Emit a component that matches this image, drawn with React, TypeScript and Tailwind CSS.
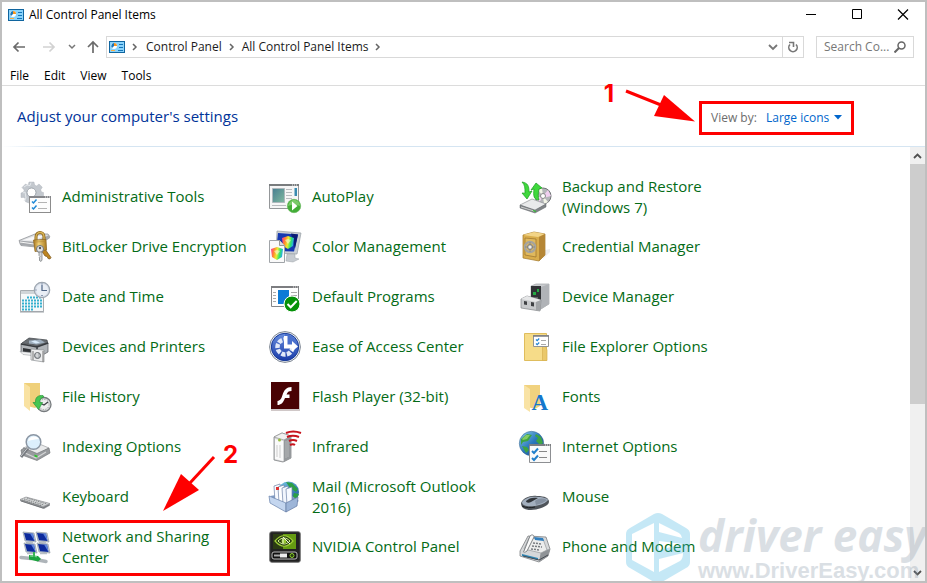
import React from "react";

type IconProps = { children: React.ReactNode };

function Icon({ children }: IconProps) {
  return (
    <svg width="32" height="32" viewBox="0 0 32 32" fill="none" className="shrink-0 overflow-visible" aria-hidden="true">
      {children}
    </svg>
  );
}

const GearIcon = () => (
  <Icon>
    <g fill="#c3c8ce" stroke="#a9afb6" strokeWidth=".4">
      <path d="M10 1h5l.6 3 2 .9L20 3l3.300 3.200-1.600 2.600.8 2.200 2 .5v4L10 22l-3.500-1.300.2-2.600-1.900-1.700L2 16.500V12l2.600-1 .6-2L3 6.500 6.500 3l2.600 1.500z" />
    </g>
    <path d="M5 6l3-2 3 .6 1-3M4 12l2-1 1 6-2 3" stroke="#e4e8ec" strokeWidth="1" />
    <circle cx="12.500" cy="11.500" r="4.500" fill="#fff" stroke="#9ea5ac" />
    <rect x="10.500" y="15.500" width="21" height="16" fill="#fdfdfd" stroke="#8c8c8c" />
    <path d="M10 16h22" stroke="#85868a" strokeWidth="2" />
    <path d="M26 16h1M28 16h1M30 16h1" stroke="#eee" />
    <path d="M13 20.500l1.500 1.500 3-3.500M13 26.500l1.500 1.500 3-3.500" stroke="#2089d6" strokeWidth="1.500" />
    <path d="M19 21.500h9M19 27.500h9" stroke="#b4b4b4" />
  </Icon>
);

const BitLockerIcon = () => (
  <Icon>
    <defs>
      <linearGradient id="lock" x1="0" x2="1">
        <stop stopColor="#a9771d" />
        <stop offset=".4" stopColor="#f1d27a" />
        <stop offset="1" stopColor="#a97a1f" />
      </linearGradient>
    </defs>
    <path d="M0 9.500L16 3h13l2 3-14 10-15-1.500z" fill="#dcdee1" stroke="#85888c" strokeWidth=".7" />
    <path d="M0 9.500l16 1.500L30 4l1 3-14 9-16-2z" fill="#a5a8ac" />
    <path d="M3 9.500L16 5h9l-9 4.500z" fill="#f8f8f9" />
    <path d="M1 11l14 2" stroke="#f5f5f5" />
    <path d="M17 10V6c0-6 8-6 8 0v4" stroke="#8c6519" strokeWidth="3" />
    <path d="M17 10V6c0-6 8-6 8 0v4" stroke="#d9b558" strokeWidth="1.300" />
    <path d="M22 19l4-1 6 8.500-1 1.500-2-.5-1-2-2-.5z" fill="#bd8521" stroke="#79541a" strokeWidth=".7" />
    <path d="M14.500 9L27 8.500l.6 10.500L16 20.500z" fill="url(#lock)" stroke="#8a621c" strokeWidth=".7" />
    <path d="M15.500 11l11-.5M15.500 17l11.500-1" stroke="#b38430" strokeWidth=".6" />
    <circle cx="21" cy="18" r="3.500" fill="#e1e3e5" stroke="#6e7276" />
    <circle cx="21" cy="17" r="1.200" fill="#555" />
    <path d="M20 21h3v8l-1 1.500L20 29l1-1-1-1 1-1.500-1-1z" fill="#d5d7d9" stroke="#73777a" strokeWidth=".7" />
  </Icon>
);

const DateIcon = () => (
  <Icon>
    <path d="M1.500 9.500h23v21h-23z" fill="#f6f8f9" stroke="#a7acb0" />
    <path d="M2 10h22v3H2z" fill="#d0d5d8" />
    <path d="M8 16.500h15M3 19.500h20M3 22.500h20M3 25.500h20M3 28.500h11" stroke="#35b0cf" strokeWidth="2" strokeDasharray="2 1" />
    <path d="M1 31h24" stroke="#9ea3a8" />
    <circle cx="23" cy="9" r="7.700" fill="#d8dfe9" stroke="#9da6b0" strokeWidth="1.200" />
    <circle cx="23" cy="9" r="6" fill="#e9eef5" />
    <path d="M23 4v5.500h5M23 2.500v1M23 14v1M16.500 9h1" stroke="#4f6585" strokeWidth="1.200" />
  </Icon>
);

const PrinterIcon = () => (
  <Icon>
    <path d="M3 12L10 7l18 2 1 4-4 3z" fill="#696e73" stroke="#3f4347" strokeWidth=".7" />
    <path d="M10 9.500l11-1 5 3-8 2-8-1z" fill="#9fafbe" />
    <path d="M12 10.500l4-1 5 2-4 1z" fill="#d9ebfa" />
    <path d="M2 12.500l16 2.500 11-3v9l-9 5-18-5z" fill="#b0b4b8" stroke="#54585c" strokeWidth=".7" />
    <path d="M18 15v10M2 13l16 3 11-4" stroke="#383c40" strokeWidth="1.600" />
    <path d="M4 17l9 1.500v4L4 21z" fill="#303336" />
    <path d="M1 20.500l11 1 1 3-9-1z" fill="#f1f2f3" stroke="#8e9296" strokeWidth=".5" />
    <path d="M12 18l13 1v12l-13-2z" fill="#edeeef" stroke="#8c9093" strokeWidth=".7" />
    <path d="M14 20v9M24 20v11" stroke="#777" />
    <circle cx="18.500" cy="24.500" r="3" fill="#b8bcc0" stroke="#666a6e" />
    <path d="M18 22v4" stroke="#eee" />
  </Icon>
);

const FileHistoryIcon = () => (
  <Icon>
    <path d="M5 2h16v22l-5 3-11-3z" fill="#efd07a" />
    <path d="M5 2l6 4v24l-6-5z" fill="#f9e2a2" />
    <circle cx="25" cy="23.500" r="7" fill="#d9dbdc" stroke="#777b7e" strokeWidth="1.300" />
    <circle cx="25" cy="23.500" r="5" fill="#eee" stroke="#999" strokeDasharray="1 1.600" />
    <path d="M21 22l4 2 4-3" stroke="#404347" strokeWidth="1.200" />
    <path d="M24 14.500c-5-.5-8 2-7.500 7H14l5.500 7 4-7h-2.700c0-3 .7-4.500 4-5.500z" fill="#45c652" stroke="#2c983d" strokeWidth=".7" />
  </Icon>
);

const IndexingIcon = () => (
  <Icon>
    <path d="M4 17l14-5 12 5-12 7z" fill="#e9eaeb" stroke="#9b9ea1" strokeWidth=".7" />
    <path d="M2 19l3-2 13 5.500L30 17l1 5-13 7.500L3 24z" fill="#989b9e" stroke="#75787b" strokeWidth=".7" />
    <path d="M4 21l13 6 10-6" stroke="#d3d4d5" strokeWidth="1.300" />
    <path d="M15.500 23.500l3 1.300v2l-3-1.300z" fill="#2bc32b" />
    <path d="M9 17l-7 9" stroke="#777b80" strokeWidth="3" />
    <path d="M8.500 17l-6.500 8" stroke="#c9ccd0" />
    <circle cx="14.500" cy="11" r="7.300" fill="#dceffc" stroke="#8b96a3" strokeWidth="1.500" />
    <path d="M9 10c1-5 8-6 11-2-4 0-7 1-11 2z" fill="#fff" />
  </Icon>
);

const KeyboardIcon = () => (
  <Icon>
    <path d="M1 18.500L7 16l24 6.500v2L25 28 1 20z" fill="#9a9da0" />
    <path d="M1 18.500L7 16l24 6.500-7 3z" fill="#d5d7d8" stroke="#8e9193" strokeWidth=".6" />
    <path d="M5 18l20 6M8 17l20 6M3 19l20 6" stroke="#747779" strokeDasharray="1.500 .8" strokeWidth=".8" />
    <path d="M2 20l22 7 6-3" stroke="#5e6265" strokeWidth=".7" />
  </Icon>
);

const Monitor = ({ x, y }: { x: number; y: number }) => (
  <g transform={`translate(${x} ${y})`}>
    <path d="M0 0l11 1 2 9-11-1z" fill="#c3ced8" stroke="#7d8a96" strokeWidth=".6" />
    <path d="M1 1l9 .8L11.500 9 3 8.200z" fill="#0c2a9c" />
    <path d="M7 1.500l3 .3L11.500 9z" fill="#5d84dd" />
    <path d="M3 10.500h7" stroke="#b7bec5" strokeWidth="1.500" />
  </g>
);

const NetworkIcon = () => (
  <Icon>
    <Monitor x={4} y={1} />
    <Monitor x={17} y={1} />
    <Monitor x={5} y={12} />
    <Monitor x={18} y={12} />
    <path d="M2 26.500l10 1M19 29l8 1.500" stroke="#aeb4b9" strokeWidth="3.500" strokeLinecap="round" />
    <path d="M10 24l9 1 3 3-3 2.500-9-2z" fill="#1ca23e" />
    <path d="M11 25l7 .8" stroke="#80dc91" />
    <path d="M14 21h2v5h-2z" fill="#39b454" />
  </Icon>
);

const AutoPlayIcon = () => (
  <Icon>
    <defs>
      <linearGradient id="picture" x1="0" y1="0" x2="1" y2="1">
        <stop stopColor="#477e91" />
        <stop offset="1" stopColor="#80b99f" />
      </linearGradient>
    </defs>
    <path d="M.5 3.500h29v24H.5z" fill="#f6f6f6" stroke="#949799" />
    <path d="M0 4h30" stroke="#797c7e" strokeWidth="2" />
    <path d="M23 4h1M25 4h1M27 4h1" stroke="#eee" />
    <path d="M3.500 7.500h12v14h-12z" fill="url(#picture)" stroke="#aeb8bd" />
    <path d="M17 8.500h6M17 11.500h6M17 14.500h6M17 17.500h6M3 24.500h14" stroke="#b9bcbf" />
    <path d="M25.500 7h2.500v8h-2.500z" fill="#398bb0" />
    <circle cx="25" cy="25" r="6.700" fill="#42ad36" stroke="#69b75e" strokeWidth=".7" />
    <path d="M19 25c2-9 12-7 12 0-4-2-8-2-12 0z" fill="#7aca69" />
    <path d="M23 20.500l5.500 4.500-5.500 4.500z" fill="#fff" />
  </Icon>
);

const ColorShield = () => (
  <>
    <path d="M0 2l6-2 6 2-1 8-5 3-5-3z" fill="url(#rainbow)" />
    <path d="M3 4l3-1 3 1-3 4z" fill="#fff" opacity=".5" />
  </>
);

const ColorIcon = () => (
  <Icon>
    <defs>
      <linearGradient id="rainbow" x1="0" x2="1" y1=".3" y2=".5">
        <stop stopColor="#ff3f8e" />
        <stop offset=".25" stopColor="#ff8a2c" />
        <stop offset=".5" stopColor="#e9f02f" />
        <stop offset=".75" stopColor="#30e072" />
        <stop offset="1" stopColor="#2aa0ff" />
      </linearGradient>
    </defs>
    <path d="M8 0l24 2-4 21-21-1z" fill="#cbd0d5" stroke="#969da3" strokeWidth=".7" />
    <path d="M9 2l20 1.500-4 17L7 20z" fill="#1639b1" />
    <path d="M22 2.500l7 1-3 14z" fill="#0b1c75" />
    <path d="M18 23h8v4l4 1-6 3-7-1z" fill="#c6cbd0" stroke="#9ba1a6" strokeWidth=".5" />
    <g transform="translate(13 5)">
      <ColorShield />
    </g>
    <path d="M.5 9.500h10l5 5v17H.5z" fill="#fafafa" stroke="#a0a4a8" />
    <path d="M10.500 9.500v5h5" fill="#ddd" stroke="#999" />
    <g transform="translate(2 16)">
      <ColorShield />
    </g>
  </Icon>
);

const DefaultsIcon = () => (
  <Icon>
    <path d="M2.500 5.500h27v20h-27z" fill="#fff" stroke="#85878a" />
    <path d="M2 6h28" stroke="#7c7d80" strokeWidth="2" />
    <path d="M24 6h1M26 6h1M28 6h1" stroke="#ddd" />
    <path d="M4 11.500h3M4 14.500h3M4 17.500h3M4 20.500h3M22 11.500h6M22 14.500h6" stroke="#aaa" />
    <path d="M9 9h11v14H9z" fill="#0d7bd6" />
    <circle cx="23" cy="23" r="8" fill="#069209" stroke="#fff" />
    <path d="M18.500 23l3.200 3.200 6-6.200" stroke="#fff" strokeWidth="2" />
  </Icon>
);

const EaseIcon = () => (
  <Icon>
    <defs>
      <linearGradient id="ease" x1="0" x2="0" y1="0" y2="1">
        <stop stopColor="#688ddd" />
        <stop offset="1" stopColor="#193ca9" />
      </linearGradient>
    </defs>
    <circle cx="16" cy="16" r="15.400" fill="#f3f5f8" stroke="#7d8692" />
    <circle cx="16" cy="16" r="13.700" fill="url(#ease)" stroke="#173a98" />
    <circle cx="16" cy="16" r="7.500" stroke="#e1e9f8" strokeWidth="4.500" strokeDasharray="4.200 1.400" />
    <path d="M16 16V3a13 13 0 0 1 12 13z" fill="#4a70cc" />
    <path d="M15 5h3.500v11H15z" fill="#fff" />
    <path d="M15 13.500h8V10l6 5.500-6 5v-3h-8z" fill="#fff" />
  </Icon>
);

const FlashIcon = () => (
  <Icon>
    <path d="M2 1h29v29H2z" fill="#d0c8c8" />
    <path d="M2 1h28v27H2z" fill="#490203" />
    <path d="M22.500 6v4c-3 0-4 1-5 3.500h3v3.500h-4.500C14 22 12 24 8.500 24v-4c3-.3 4-3 5-6 1.500-5 4-8 9-8z" fill="#fff" />
  </Icon>
);

const InfraredIcon = () => (
  <Icon>
    <path d="M5 6l8-4 9 3v22l-8 4-9-2z" fill="#d6d7d8" stroke="#707275" strokeWidth=".7" />
    <path d="M5 6l8-4 9 3-7 4z" fill="#f1f1f1" stroke="#898b8d" strokeWidth=".6" />
    <path d="M15 9l7-4v22l-7 4z" fill="#96999c" />
    <path d="M6 8l8 2v20l-8-2z" fill="#fafafa" />
    <circle cx="10.500" cy="9" r="1.500" fill="#98be3e" />
    <path d="M8 14v12M11 14v13" stroke="#ccc" />
    <path d="M17 10v17M19 9v17" stroke="#b4b6b8" />
    <path d="M17 2q7-3 15 0M18 6q6-2.500 12 0M20 10q4-2 8 0M21 14q3-1.500 5 0" stroke="#c7131c" strokeWidth="2" />
  </Icon>
);

const MailIcon = () => (
  <Icon>
    <defs>
      <linearGradient id="globe" x1="0" y1="0" x2="1" y2="1">
        <stop stopColor="#79cbe5" />
        <stop offset="1" stopColor="#174e9c" />
      </linearGradient>
    </defs>
    <circle cx="19.500" cy="11" r="10.500" fill="url(#globe)" />
    <path d="M17 1l6 1 6 6-2 3-6-4zM25 12l5 1-3 6-4-1z" fill="#2c9f45" />
    <path d="M1 15l18-3 11 8-12 6z" fill="#809cc6" />
    <path d="M5 5l6-2 2 18H6z" fill="#f9fbff" stroke="#6d82a8" strokeWidth=".7" />
    <path d="M9 6l6-2 2 19-7-1z" fill="#fff" stroke="#6d82a8" strokeWidth=".7" />
    <path d="M13 7l6-2 1 20-6-2z" fill="#f2f6fd" stroke="#6d82a8" strokeWidth=".7" />
    <path d="M17 8l6-2v19l-5-1z" fill="#f7faff" stroke="#6d82a8" strokeWidth=".7" />
    <path d="M7 6h3v3H7z" fill="#dc3434" />
    <path d="M0 15l17 7v9L1 22z" fill="#c4d6ef" stroke="#6781aa" strokeWidth=".7" />
    <path d="M17 22l12-6-1 9-11 6z" fill="#9db5d8" stroke="#6179a2" strokeWidth=".7" />
  </Icon>
);

const NvidiaIcon = () => (
  <Icon>
    <rect x=".7" y=".7" width="30.600" height="30.600" rx="2" fill="#222" stroke="#777" />
    <path d="M4 3h23v15H4z" fill="#2b3b13" />
    <path d="M14 3h13v15H14z" fill="#659b12" />
    <path d="M6 10c6-7 12-7 18 0-6 7-12 7-18 0z" fill="#263e10" stroke="#a1cf37" strokeWidth="1.200" />
    <path d="M9 10c4-4 8-4 12 0-4 4-8 4-12 0z" stroke="#d8f292" />
    <circle cx="15" cy="10" r="2.500" fill="#95c72e" />
    <path d="M14 7v6M14 6l7 7" stroke="#eff8d7" />
    <rect x="3" y="21" width="25" height="7" rx="2" fill="#111" stroke="#bbb" />
    <path d="M5 24.500h12" stroke="#aaa" strokeWidth="2" />
    <path d="M11 22.500h7v4h-7z" fill="#eee" />
    <circle cx="23" cy="24.500" r="2" fill="#263e10" stroke="#8ccc2b" />
  </Icon>
);

const BackupIcon = () => (
  <Icon>
    <circle cx="24" cy="15" r="8" fill="#b4b6b9" stroke="#727578" />
    <path d="M24 15l5-6 3 6-8 2zM24 15l-4 7-4-5z" fill="#f1cff0" />
    <path d="M24 15l-5-6 4-2zM24 15l5 6-4 2z" fill="#f3f5e7" />
    <circle cx="24" cy="15" r="2.500" fill="#fff" stroke="#888" />
    <path d="M1 24l12-6 14 5-11 7z" fill="#e9eaeb" stroke="#909396" strokeWidth=".7" />
    <path d="M1 24l15 5 11-6v3l-11 6L1 27z" fill="#808487" stroke="#63676a" strokeWidth=".5" />
    <path d="M2 26l13 4" stroke="#ccc" />
    <path d="M14 29l3 1v1l-3-1z" fill="#29cf29" />
    <path d="M3 1c6 1 7 4 7 10l3-1-5 8-5-6 3 .2C6 7 6 4 3 1z" fill="#3fd83c" stroke="#189d20" strokeWidth=".7" />
    <path d="M20 19c-5 0-6-4-5-11l-3 1 5-7 6 5-3 1c-1 5-1 8 0 11z" fill="#3fd83c" stroke="#189d20" strokeWidth=".7" />
  </Icon>
);

const CredentialIcon = () => (
  <Icon>
    <path d="M26 19l5-1v3l-7 7z" fill="#ededed" />
    <path d="M4 4l11-3 11 2v21L20 30 4 27z" fill="#d9ad4c" stroke="#a17729" strokeWidth=".7" />
    <path d="M4 4l11-3 11 2-7 3z" fill="#f2d487" />
    <path d="M20 6l6-3v21l-6 6z" fill="#b58635" />
    <path d="M6 7l11 1v18L6 24z" fill="#e0b95d" stroke="#99712c" strokeWidth=".7" />
    <circle cx="11" cy="16" r="5" fill="#e0ba60" stroke="#a5a49e" strokeWidth="2.500" />
    <circle cx="11" cy="16" r="2.500" fill="#d5d5d2" stroke="#777" />
    <path d="M11 11v10M6 16h10" stroke="#8a8a86" />
    <circle cx="11" cy="16" r="1.500" fill="#eee" />
  </Icon>
);

const DeviceIcon = () => (
  <Icon>
    <path d="M12 5l5-2h13v20l-10 6-8-5z" fill="#cacccf" stroke="#a0a3a6" strokeWidth=".7" />
    <path d="M22 6l8-3v20l-9 6z" fill="#b0b3b7" />
    <path d="M12 5h10v14H12z" fill="#303235" />
    <path d="M14 11h3v3h-3zM18 8h2v3h-2z" fill="#24ab43" />
    <path d="M13 17h6" stroke="#999" />
    <path d="M2 18l6-3 14 4-1 11-19-3z" fill="#c8cacc" stroke="#818486" strokeWidth=".7" />
    <path d="M2 18l6-3 14 4-5 2z" fill="#e6e7e8" />
    <path d="M17 21l5-2-1 11-4-1z" fill="#a1a4a7" />
    <path d="M5 20l3 .4V24l-3-.5zM12 21l3 .5v4l-3-.5z" fill="#3f4144" />
  </Icon>
);

const ExplorerIcon = () => (
  <Icon>
    <path d="M5.500 2.500h22v27h-22z" fill="#f6dc89" stroke="#dfbd5d" />
    <path d="M23.500 19v-3.500h3L28 19v10.500h-4.500z" fill="#eac86b" stroke="#d7b251" strokeWidth=".7" />
    <path d="M14.500 4.500h15v11h-15z" fill="#fff" stroke="#929496" />
    <path d="M14 5h16" stroke="#7c7e80" strokeWidth="1.500" />
    <path d="M17 8.500l1.200 1.200 2-2.200M17 12.500l1.200 1.200 2-2.200" stroke="#2485d3" strokeWidth="1.200" />
    <path d="M22 9.500h5M22 13.500h5" stroke="#aaa" />
  </Icon>
);

const FontsIcon = () => (
  <Icon>
    <path d="M5 4h16v21l-5 3-11-3z" fill="#f1d27f" />
    <path d="M5 4l6 4v23l-6-4z" fill="#f9e3a5" />
    <text x="12.500" y="29" fontSize="23" fontWeight="bold" fontFamily="Liberation Serif, serif" fill="#1477cc">
      A
    </text>
  </Icon>
);

const InternetIcon = () => (
  <Icon>
    <defs>
      <linearGradient id="world" x1="0" y1="0" x2="1" y2="1">
        <stop stopColor="#90cfec" />
        <stop offset=".5" stopColor="#2a78bd" />
        <stop offset="1" stopColor="#1b4884" />
      </linearGradient>
    </defs>
    <circle cx="12.500" cy="12.500" r="12.200" fill="url(#world)" stroke="#3a658f" strokeWidth=".5" />
    <path d="M2 8l6-5 5 1-2 3-2 3-5 1-2 3zM3 15l5 1 2 3-3 3zM17 3l5 3 2 6-3 2-4-4 2-3-3-2z" fill="#3ea443" />
    <path d="M3 8l4-4 4 0-3 4-4 1z" fill="#85cb62" />
    <path d="M10.500 13.500h21v18h-21z" fill="#fafafa" stroke="#8d8f92" />
    <path d="M10 14h22" stroke="#7b7e81" strokeWidth="2" />
    <path d="M26 14h1M28 14h1M30 14h1" stroke="#eee" />
    <path d="M13 20l2 2 4-4.500M13 27l2 2 4-4.500" stroke="#207fcb" strokeWidth="2" />
    <path d="M20 20.500h8M20 26.500h8" stroke="#888" />
  </Icon>
);

const MouseIcon = () => (
  <Icon>
    <path d="M2 22c2-5 9-8 16-7 8 0 12 2 12 6 0 4-11 8-18 8-6 0-10-2-10-7z" fill="#4f545a" />
    <path d="M3 21c3-4 9-6 16-5 6 0 10 2 10 3-2 3-7 5-13 6-7 1-13 0-13-4z" fill="#a3afbe" />
    <path d="M7 20c3-3 7-4 12-3l-7 4c-2 1-5 1-5-1z" fill="#32363b" />
    <path d="M16 20c4-3 8-3 12-1-2 2-7 4-11 5z" fill="#8591a1" />
    <path d="M3 25c4 2 9 2 13 1" stroke="#1d2024" strokeWidth="1" />
  </Icon>
);

const PhoneIcon = () => (
  <Icon>
    <path d="M1 20L9 5l18 1 4 12-2 7-9 6L1 25z" fill="#d6d8da" stroke="#6d7073" strokeWidth=".7" />
    <path d="M22 20l9-2-2 7-9 6z" fill="#8f9397" />
    <path d="M10 7l14 1 4 11-6 3-17-4z" fill="#eceded" stroke="#96999c" strokeWidth=".7" />
    <path d="M15 6l9 1 1 3-9-1z" fill="#327fbd" />
    <path d="M5 20L11 5c2-2 4-1 4 1L8 20c-2 2-5 1-3 0z" fill="#fafafa" stroke="#73777a" strokeWidth=".9" />
    <path d="M14 12l9 1M13 15l10 1M12 18l9 1" stroke="#777b80" strokeWidth="1.500" strokeDasharray="2 1" />
    <path d="M3 23l16 4v2L3 25z" fill="#2d86b5" />
    <path d="M4 25l16 4 9-5" stroke="#454b52" />
  </Icon>
);

const items = [
  { name: "Administrative Tools", icon: GearIcon },
  { name: "AutoPlay", icon: AutoPlayIcon },
  { name: "Backup and Restore (Windows 7)", icon: BackupIcon },
  { name: "BitLocker Drive Encryption", icon: BitLockerIcon },
  { name: "Color Management", icon: ColorIcon },
  { name: "Credential Manager", icon: CredentialIcon },
  { name: "Date and Time", icon: DateIcon },
  { name: "Default Programs", icon: DefaultsIcon },
  { name: "Device Manager", icon: DeviceIcon },
  { name: "Devices and Printers", icon: PrinterIcon },
  { name: "Ease of Access Center", icon: EaseIcon },
  { name: "File Explorer Options", icon: ExplorerIcon },
  { name: "File History", icon: FileHistoryIcon },
  { name: "Flash Player (32-bit)", icon: FlashIcon },
  { name: "Fonts", icon: FontsIcon },
  { name: "Indexing Options", icon: IndexingIcon },
  { name: "Infrared", icon: InfraredIcon },
  { name: "Internet Options", icon: InternetIcon },
  { name: "Keyboard", icon: KeyboardIcon },
  { name: "Mail (Microsoft Outlook 2016)", icon: MailIcon },
  { name: "Mouse", icon: MouseIcon },
  { name: "Network and Sharing Center", icon: NetworkIcon, marked: true },
  { name: "NVIDIA Control Panel", icon: NvidiaIcon },
  { name: "Phone and Modem", icon: PhoneIcon },
];

function PanelIcon() {
  return (
    <svg width="16" height="12" viewBox="0 0 16 12" className="shrink-0" aria-hidden="true">
      <path d="M0 0h16v12H0z" fill="#10659f" />
      <path d="M1 1h14v10H1z" fill="#8ad3fb" />
      <circle cx="5" cy="5" r="3" fill="#fff" />
      <path d="M5 5V2a3 3 0 0 0-2 5z" fill="#1976bb" />
      <path d="M5 5V2a3 3 0 0 1 3 3z" fill="#f7941d" />
      <path d="M10 3h4v1h-4zM10 6h4v1h-4zM9 9h5v1H9z" fill="#1575b8" />
      <path d="M2 9h4v1H2z" fill="#f7ac42" />
    </svg>
  );
}

function Chevron({ className }: { className?: string }) {
  return (
    <svg width="6" height="8" viewBox="0 0 6 8" fill="none" className={className} aria-hidden="true">
      <path d="M1 1l3 3-3 3" stroke="currentColor" strokeWidth="1.500" />
    </svg>
  );
}

function TitleBar() {
  return (
    <header className="flex h-[26px] shrink-0 items-center justify-between pl-1.5">
      <div className="flex items-center gap-[5px]">
        <PanelIcon />
        <h1 className="text-xs text-black">All Control Panel Items</h1>
      </div>
      <div className="flex items-center">
        <button aria-label="Minimize" className="flex h-6 w-[46px] items-center justify-center">
          <svg width="12" height="12" viewBox="0 0 12 12"><path d="M1 5.500h10" stroke="#000" /></svg>
        </button>
        <button aria-label="Maximize" className="flex h-6 w-[46px] items-center justify-center">
          <svg width="12" height="12" viewBox="0 0 12 12"><path d="M1.500 .5h9v9h-9z" fill="none" stroke="#000" /></svg>
        </button>
        <button aria-label="Close" className="flex h-6 w-[45px] items-center justify-center">
          <svg width="12" height="12" viewBox="0 0 12 12"><path d="M1 .5l10 10M11 .5l-10 10" stroke="#000" strokeWidth="1.200" /></svg>
        </button>
      </div>
    </header>
  );
}

function AddressBar() {
  return (
    <div className="mt-2 flex h-[22px] shrink-0 items-center pr-[11px] pl-[10px] text-xs">
      <div className="flex w-[94px] shrink-0 items-center">
        <button aria-label="Back" className="w-[30px] text-[#6b6b6b]">
          <svg width="14" height="12" viewBox="0 0 14 12" fill="none" stroke="currentColor" strokeWidth="1.700">
            <path d="M13 6H2M6.500 1.500L2 6l4.500 4.500" />
          </svg>
        </button>
        <button aria-label="Forward" className="w-[26px] text-[#d2d2d2]">
          <svg width="14" height="12" viewBox="0 0 14 12" fill="none" stroke="currentColor" strokeWidth="1.700">
            <path d="M1 6h11M7.500 1.500L12 6l-4.500 4.500" />
          </svg>
        </button>
        <button aria-label="Recent locations" className="w-[18px] text-[#777]">
          <svg width="8" height="6" viewBox="0 0 8 6" fill="none">
            <path d="M1 1l3 3 3-3" stroke="currentColor" strokeWidth="1.500" />
          </svg>
        </button>
        <button aria-label="Up" className="text-[#6b6b6b]">
          <svg width="14" height="14" viewBox="0 0 14 14" fill="none" stroke="currentColor" strokeWidth="1.700">
            <path d="M7 13V2M2 7l5-5 5 5" />
          </svg>
        </button>
      </div>
      <div className="flex h-[22px] min-w-0 flex-1 items-center border border-[#d9d9d9] text-[#1b1b1b]">
        <nav className="flex flex-1 items-center pl-0.5">
          <PanelIcon />
          <Chevron className="ml-[7px] text-[#666]" />
          <button className="ml-2">Control Panel</button>
          <Chevron className="mx-[7px] text-[#666]" />
          <button>All Control Panel Items</button>
          <Chevron className="mx-[7px] text-[#666]" />
        </nav>
        <button aria-label="Previous locations" className="flex h-full w-5 items-center justify-center border-r border-[#d9d9d9]">
          <svg width="10" height="7" viewBox="0 0 10 7" fill="none">
            <path d="M1 1l4 4 4-4" stroke="#777" strokeWidth="1.800" />
          </svg>
        </button>
        <button aria-label="Refresh" className="flex h-full w-5 items-center justify-center">
          <svg width="12" height="12" viewBox="0 0 12 12" fill="none" stroke="#777" strokeWidth="1.600">
            <path d="M9 3.500A4.200 4.200 0 1 1 3 3.500" />
            <path d="M2 1.500h4.500V6" />
          </svg>
        </button>
      </div>
      <div className="ml-3 flex h-[22px] w-[98px] shrink-0 items-center border border-[#d9d9d9] px-[7px]">
        <input
          type="text"
          aria-label="Search Control Panel"
          placeholder="Search Co..."
          className="w-full min-w-0 outline-none placeholder:text-[#777]"
        />
        <svg width="12" height="12" viewBox="0 0 12 12" fill="none" stroke="#666" strokeWidth="1.500" className="shrink-0">
          <circle cx="7.500" cy="4.500" r="3.500" />
          <path d="M5 7l-4.500 4.500" strokeWidth="2" />
        </svg>
      </div>
    </div>
  );
}

function MenuBar() {
  return (
    <nav className="mt-[7px] flex h-[21px] shrink-0 items-center gap-[15px] border-b border-[#dcdcdc] pt-0.5 pl-2 text-xs text-black">
      <button>File</button>
      <button>Edit</button>
      <button>View</button>
      <button>Tools</button>
    </nav>
  );
}

function SettingsHeader() {
  return (
    <div className="relative flex h-[61px] shrink-0 items-center justify-between pt-0.5 pr-[71px] pl-[15px]">
      <h2 className="pb-0.5 text-[15px] text-[#003399]">Adjust your computer's settings</h2>
      <div className="relative flex h-[34px] w-[155px] items-center justify-between border-3 border-[#fe0000] pr-[9px] pl-[9px] text-xs">
        <label htmlFor="view-by" className="text-[#6d6d6d]">View by:</label>
        <div className="flex items-center gap-1">
          <select id="view-by" defaultValue="large" className="appearance-none bg-transparent text-[#0066cc] outline-none">
            <option value="large">Large icons</option>
            <option value="small">Small icons</option>
            <option value="category">Category</option>
          </select>
          <svg width="8" height="5" viewBox="0 0 8 5" aria-hidden="true"><path d="M0 0h8L4 4.500z" fill="#0066cc" /></svg>
        </div>
        {/* First step marker */}
        <div className="pointer-events-none absolute -top-4 right-[155px] flex gap-2 text-[#fe0000]">
          <span className="-mt-2 w-3.5 text-center font-[Inter,sans-serif] text-2xl leading-7 font-bold">1</span>
          <svg width="72" height="34" viewBox="0 0 72 34" fill="currentColor">
            <path d="M2 3l40 16" stroke="currentColor" strokeWidth="3" />
            <path d="M40 7l31 26.500-41-5.500z" />
          </svg>
        </div>
      </div>
      <div className="absolute inset-x-0 bottom-0 h-px bg-linear-to-r from-transparent via-[#d5e5f2] via-5% to-[#d5e5f2]" />
    </div>
  );
}

function ItemGrid() {
  return (
    <main className="min-w-0 flex-1 overflow-hidden pt-[25px] pl-[17px]">
      <div className="grid auto-rows-[50px] grid-cols-[repeat(auto-fill,250px)]">
        {items.map(({ name, icon: ItemIcon, marked }) => (
          <div key={name} className="relative flex items-center">
            <a href="#" className="flex items-center gap-[11px] pr-5 text-[15px] leading-[21px] text-[#046b16]">
              <ItemIcon />
              <span className="pb-px">{name}</span>
            </a>
            {marked && (
              <>
                <div className="pointer-events-none absolute -top-0.5 -bottom-1 -left-1 w-[215px] border-3 border-[#fe0000]" />
                {/* Second step marker */}
                <div className="pointer-events-none absolute bottom-full left-36 flex items-start gap-1.5 pb-[11px] text-[#fe0000]">
                  <svg width="54" height="58" viewBox="0 0 54 58" fill="currentColor">
                    <path d="M51 4L26 31" stroke="currentColor" strokeWidth="3" />
                    <path d="M18 21l18 16L0 58z" />
                  </svg>
                  <span className="-mt-3 font-[Inter,sans-serif] text-2xl leading-7 font-bold">2</span>
                </div>
              </>
            )}
          </div>
        ))}
      </div>
    </main>
  );
}

function ScrollBar() {
  return (
    <div className="flex w-[15px] shrink-0 flex-col bg-[#f0f0f0]">
      <button aria-label="Scroll up" className="flex h-[17px] items-center justify-center">
        <svg width="9" height="6" viewBox="0 0 9 6" fill="none"><path d="M1 5l3.500-3.500L8 5" stroke="#505050" strokeWidth="1.800" /></svg>
      </button>
      <div className="min-h-0 flex-1">
        <div className="h-3/5 bg-[#cdcdcd]" />
      </div>
      <button aria-label="Scroll down" className="flex h-[17px] items-center justify-center">
        <svg width="9" height="6" viewBox="0 0 9 6" fill="none"><path d="M1 1l3.500 3.500L8 1" stroke="#505050" strokeWidth="1.800" /></svg>
      </button>
    </div>
  );
}

function Watermark() {
  return (
    <div className="pointer-events-none absolute right-0 -bottom-0.5 flex w-[299px] items-end gap-2">
      <svg width="64" height="70" viewBox="0 0 64 70" className="shrink-0 opacity-30">
        <path
          fill="#43b6e2"
          fillRule="evenodd"
          d="M28 1q4-2 8 0l24 14q4 2 4 6v28q0 4-4 6L36 69q-4 2-8 0L4 55q-4-2-4-6V21q0-4 4-6zM28 10L6 21v26l22 12zM33 10v9l23 6q0-3-3-5zM33 28v9l24-6zM33 46v13l21-11q3-2 3-8z"
        />
      </svg>
      <div className="text-[#8797a7] opacity-30">
        <div className="text-[44px] leading-12 font-bold whitespace-nowrap italic">driver easy</div>
        <div className="font-[Liberation_Sans,sans-serif] text-[22px] leading-6 font-bold">www.DriverEasy.com</div>
      </div>
    </div>
  );
}

function App() {
  return (
    <div className="relative flex h-screen flex-col overflow-hidden border-2 border-[#bfbfbf] bg-white font-[Open_Sans,Noto_Sans,sans-serif]">
      <TitleBar />
      <AddressBar />
      <MenuBar />
      <SettingsHeader />
      <div className="flex min-h-0 flex-1">
        <ItemGrid />
        <ScrollBar />
      </div>
      <Watermark />
    </div>
  );
}

export default App;
